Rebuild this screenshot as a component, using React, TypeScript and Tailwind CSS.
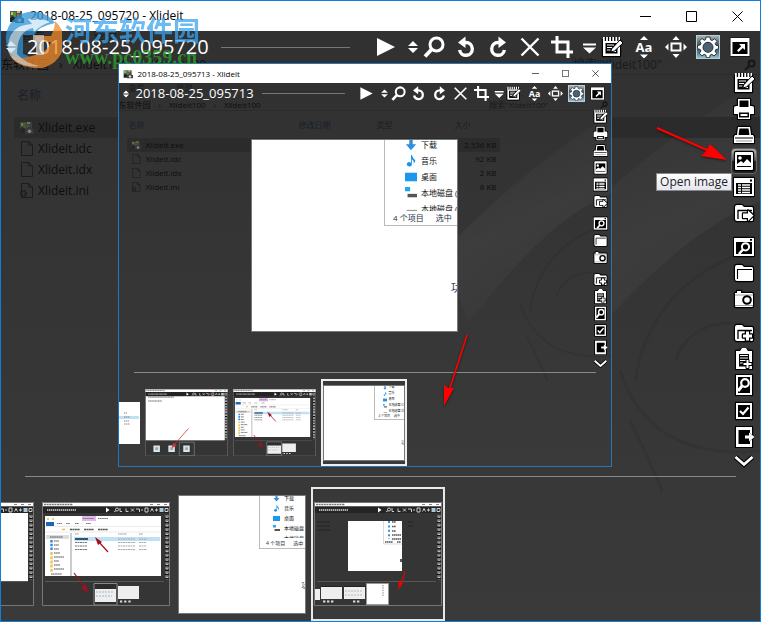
import type { ReactNode } from "react";

type Size = "lg" | "sm";

const sizes = {
  lg: {
    title: "h-[30px] pl-2 gap-[6px] text-[12px]",
    app: "size-[15px]",
    caption: "w-[46px]",
    captionIcon: "size-[11px]",
    toolbar: "h-8 pl-[5px] pr-1",
    name: "text-[20px] gap-[11px]",
    arrows: "h-3 w-[10px]",
    rule: "ml-3 mr-5",
    tools: "w-[386px]",
    icon: "size-[22px]",
    side: "w-8 pt-[7px] gap-2",
    cell: "h-[26px]",
    ghost: "text-[12px]",
  },
  sm: {
    title: "h-[19px] pl-1 gap-[5px] text-[8px]",
    app: "size-[10px]",
    caption: "w-[30px]",
    captionIcon: "size-[7px]",
    toolbar: "h-[21px] pl-1 pr-[3px]",
    name: "text-[13px] gap-[7px]",
    arrows: "h-2 w-[6px]",
    rule: "ml-2 mr-3",
    tools: "w-[251px]",
    icon: "size-[15px]",
    side: "w-5 pt-1 gap-[5px]",
    cell: "h-[17px]",
    ghost: "text-[8px]",
  },
};

function Icon({ children, className = "size-full", box = "0 0 22 22" }: { children: ReactNode; className?: string; box?: string }) {
  return (
    <svg viewBox={box} className={className} fill="white" stroke="none" aria-hidden="true">
      {children}
    </svg>
  );
}

/* white shape on a black halo */
function Halo({ d, w = 2.4 }: { d: string; w?: number }) {
  return <path d={d} fill="white" stroke="black" strokeWidth={w} strokeLinejoin="round" style={{ paintOrder: "stroke" }} />;
}

function Line({ d, w = 2, c = "white" }: { d: string; w?: number; c?: string }) {
  return <path d={d} fill="none" stroke={c} strokeWidth={w} />;
}

const folder = "M2 5Q2 3 4 3H9L11 5H19Q20 5 20 7V18Q20 19 19 19H4Q2 19 2 17Z";

const icons: Record<string, ReactNode> = {
  play: <path d="M2 2 20 11 2 20Z" />,
  updown: <path d="M6 10 11 5 16 10ZM6 12H16L11 17Z" />,
  search: (
    <>
      <circle cx="13.5" cy="8.5" r="6.5" fill="none" stroke="white" strokeWidth="3" />
      <Line d="M9 13 2 20.5" w={3.8} />
    </>
  ),
  undo: (
    <>
      <Line d="M9 6.5H11A6.4 6.4 0 1 1 4.6 14" w={3.4} />
      <path d="M3 6.500 10.500.5V12Z" />
    </>
  ),
  redo: (
    <>
      <Line d="M13 6.5H11A6.4 6.4 0 1 0 17.4 14" w={3.4} />
      <path d="M19 6.500 11.500.5V12Z" />
    </>
  ),
  close: <Line d="M2.500 2.500 19.500 19.500M19.500 2.500 2.500 19.500" w={2.4} />,
  crop: <Line d="M6 0V16H22M0 6H17V22" w={3} />,
  menu: <path d="M7 7.500H20V9.500H7ZM7 11.500H20L13.500 17.500Z" />,
  note: (
    <>
      <Halo d="M2 4H19V20H2Z" />
      <Line d="M3 3H19" w={4} c="black" />
      <path d="M2 3H19" stroke="white" strokeWidth="4" strokeDasharray="1.8 1.3" />
      <path d="M4.5 7H16.5V17.5H4.5Z" fill="black" />
      <Line d="M6 9H13M6 11.5H11M6 14H9.5M12 15.5H15" w={1.2} />
      <path d="M19 4 22 7 13.5 15 9.5 16 11 12.5Z" stroke="black" strokeWidth="1" />
    </>
  ),
  font: (
    <>
      <path d="M7 4 11 0 15 4ZM7 18.5H15L11 22.5Z" />
      <text x="11" y="16" textAnchor="middle" fontSize="13" fontWeight="700" fontFamily="Open Sans, sans-serif">Aa</text>
    </>
  ),
  move: (
    <>
      <rect x="6.5" y="7.5" width="9" height="7" fill="none" stroke="white" strokeWidth="2" />
      <path d="M7.5 4 11 0 14.5 4ZM7.5 18H14.5L11 22ZM3.5 7.5V14.5L0 11ZM18.5 7.5V14.5L22 11Z" />
    </>
  ),
  settings: (
    <>
      <path
        d="M9 1H13L13.5 3.8 15.2 4.5 17.6 2.7 20 5.3 18.2 7.6 19 9.3 21.5 9.7V12.9L18.9 13.5 18.1 15.1 19.6 17.5 17 20 14.8 18.3 13.2 19 12.7 21.7H9.4L8.8 19 7.2 18.3 4.8 19.8 2.3 17.2 4 15 3.2 13.4.5 12.8V9.4L3.3 8.9 4 7.2 2.4 5 5 2.5 7.2 4.2 8.6 3.7Z"
        stroke="#27323b"
        strokeWidth="1"
      />
      <circle cx="11" cy="11.3" r="5" fill="#4c6273" stroke="#222e38" strokeWidth="1" />
    </>
  ),
  window: (
    <>
      <Halo d="M1.500 2H20.500V20H1.500Z" w={1.2} />
      <path d="M3.500 6H18.500V18H3.500Z" fill="black" />
      <path d="M10 8H16V14L13.800 12 9.500 16 8 14.500 12.200 10.300Z" />
    </>
  ),
  print: (
    <>
      <Halo d="M5 1H17V8H19Q21 8 21 10V16H17V21H5V16H1V10Q1 8 3 8H5Z" />
      <path d="M6.5 2.5H15.5V9H6.5ZM6 14.5H16V19.5H6Z" fill="black" />
      <path d="M7.5 16H14.5V18H7.5Z" />
    </>
  ),
  scan: (
    <>
      <Halo d="M5 3H17L18 11H20L21 13V19H1V13L2 11H4Z" />
      <path d="M6.5 4.5H15.5L16.5 11H5.5Z" fill="black" />
      <Line d="M2 14H20" w={1} c="black" />
      <Line d="M3 17H19" w={1} c="#999" />
    </>
  ),
  image: (
    <>
      <Halo d="M3 2H19Q20 2 20 3V19Q20 20 19 20H3Q2 20 2 19V3Q2 2 3 2Z" />
      <path d="M4 5H18V17H4Z" fill="black" />
      <circle cx="7" cy="8" r="1.8" />
      <path d="M4 16V14L8 11 10.5 13 14 9 18 13V16Z" />
    </>
  ),
  list: (
    <>
      <Halo d="M1 2H21V20H1Z" />
      <path d="M3 7H19V18H3ZM17 3.5H19V5.5H17Z" fill="black" />
      <Line d="M5 9H17M5 11.5H17M5 14H17M5 16.5H17" w={1.5} />
      <Line d="M8.5 8V17" w={1} c="black" />
    </>
  ),
  export: (
    <>
      <Halo d={folder} />
      <Line d="M5 17V8.5H19" w={1.3} c="black" />
      <Halo d="M10 11.5H15V8.5L20.5 13.5 15 19V16H10Z" w={2.4} />
    </>
  ),
  find: (
    <>
      <Halo d="M1 2H21V20H1Z" />
      <path d="M3 6H19V18H3ZM17 3H19V4.8H17Z" fill="black" />
      <circle cx="12.5" cy="10.8" r="3.6" fill="none" stroke="white" strokeWidth="2" />
      <Line d="M10 13.5 6 18" w={2.6} />
    </>
  ),
  folder: (
    <>
      <Halo d={folder} />
      <Line d="M4.5 17V7.5H19" w={1.1} c="black" />
    </>
  ),
  camera: (
    <>
      <Halo d="M2 5H4V3H8V5H19Q20 5 20 6V18Q20 19 19 19H3Q2 19 2 18Z" />
      <Line d="M2 7H20M2 17.5H20" w={0.8} c="#888" />
      <circle cx="14" cy="12" r="3.8" stroke="black" strokeWidth="2" />
    </>
  ),
  folderAdd: (
    <>
      <Halo d={folder} />
      <Line d="M5 17V8.5H19" w={1.3} c="black" />
      <Halo d="M13 9.5H16V12.5H19V15.5H16V18.5H13V15.5H10V12.5H13Z" w={2.6} />
    </>
  ),
  clipboard: (
    <>
      <Halo d="M3 3H7L9 0H13L15 3H19V21H3Z" />
      <path d="M6 6H16V18.5H6Z" fill="black" />
      <Line d="M7 7.5H15M7 10H15M7 12.5H13M7 15H12" w={1.2} />
      <Halo d="M13.5 12H15.5V15H18.5V17H15.5V20H13.5V17H10.5V15H13.5Z" w={2} />
    </>
  ),
  preview: (
    <>
      <Halo d="M3 1H19V21H3Z" />
      <path d="M5 3H17V19H5Z" fill="black" />
      <circle cx="12" cy="9" r="3.8" fill="none" stroke="white" strokeWidth="2.2" />
      <Line d="M9 12 5 17" w={3} />
    </>
  ),
  check: (
    <>
      <Halo d="M3 3H19V19H3Z" />
      <path d="M5 5H17V17H5Z" fill="black" />
      <Line d="M7 11 10 14 15.5 7.5" w={2.2} />
    </>
  ),
  exit: (
    <>
      <Halo d="M3 1H19V21H3Z" />
      <path d="M5.5 4H17V18H5.5Z" fill="black" />
      <Halo d="M12 9.5H16V6.5L21.5 11 16 15.5V12.5H12Z" w={0.6} />
    </>
  ),
  more: (
    <>
      <Line d="M2.5 7 11 14.5 19.5 7" w={5} c="black" />
      <Line d="M2.5 7 11 14.5 19.5 7" w={2.8} />
    </>
  ),
};

const tools = ["play", "", "updown", "search", "undo", "redo", "close", "crop", "menu", "note", "font", "move", "settings", "window"];

const sideGroups = [
  ["note", "print", "scan", "image", "list", "export"],
  ["find", "folder", "camera"],
  ["folderAdd", "clipboard", "preview", "check", "exit", "more"],
];

function AppIcon({ className }: { className: string }) {
  return (
    <svg viewBox="0 0 15 15" className={className} aria-hidden="true">
      <path d="M1 2H13V10H1Z" fill="#315f78" />
      <path d="M2 3H5V6H2ZM8 2H11V4H8Z" fill="#e8b92e" />
      <path d="M4 3H7V8H4Z" fill="#5a8d34" />
      <path d="M8 5H10V8H8Z" fill="#d94b2b" />
      <path d="M1 9 4 7 7 10V13H1Z" fill="#222" />
      <path d="M6 9H8L9 7H12L13 9H15V14H6Z" fill="#444" />
      <circle cx="10.5" cy="11.3" r="1.8" fill="#ddd" />
    </svg>
  );
}

function TitleBar({ size, title }: { size: Size; title: string }) {
  const s = sizes[size];
  return (
    <header className={`flex shrink-0 items-center bg-white text-black ${s.title}`}>
      <AppIcon className={s.app} />
      <h1 className="flex-1 whitespace-nowrap">{title} - Xlideit</h1>
      <div className="flex h-full">
        {["M0 5.5H11", "M.5.5H10.5V10.5H.5Z", "M.5.5 10.5 10.5M10.5.5.5 10.5"].map((d, i) => (
          <button key={d} aria-label={["Minimize", "Maximize", "Close"][i]} className={`grid place-items-center ${s.caption}`}>
            <svg viewBox="0 0 11 11" className={s.captionIcon} fill="none" stroke="black">
              <path d={d} />
            </svg>
          </button>
        ))}
      </div>
    </header>
  );
}

function Toolbar({ size, name }: { size: Size; name: string }) {
  const s = sizes[size];
  return (
    <div className={`relative flex shrink-0 items-center ${s.toolbar}`}>
      <div className={`flex items-center whitespace-nowrap leading-none text-white ${s.name}`}>
        <button aria-label="Sort" className={s.arrows}>
          <Icon box="0 0 10 12">
            <path d="M0 5 5 0 10 5ZM0 7H10L5 12Z" />
          </Icon>
        </button>
        <span>{name}</span>
      </div>
      <div className={`h-px flex-1 bg-[#777] ${s.rule}`} />
      <div
        className={`grid h-full shrink-0 grid-cols-[32fr_6fr_10fr_32fr_32fr_32fr_32fr_32fr_18fr_32fr_32fr_32fr_32fr_32fr] ${s.tools}`}
      >
        {tools.map((tool, i) =>
          tool ? (
            <button key={i} aria-label={tool} className="flex min-w-0 items-center justify-center">
              <span
                className={`shrink-0 ${s.icon} ${tool === "settings" ? "outline outline-[#b9cdd6] bg-linear-to-b from-[#a5b2b8] via-[#30424f] to-[#8fc0d2]" : ""}`}
              >
                <Icon>{icons[tool]}</Icon>
              </span>
            </button>
          ) : (
            <span key={i} />
          ),
        )}
      </div>
    </div>
  );
}

function SideBar({ size, active }: { size: Size; active?: string }) {
  const s = sizes[size];
  return (
    <nav className={`relative z-10 flex shrink-0 flex-col ${s.side}`}>
      {sideGroups.map((group) => (
        <div key={group[0]} className="flex flex-col">
          {group.map((tool) => (
            <div key={tool} className={`relative grid place-items-center ${tool === "more" ? (size === "lg" ? "h-5" : "h-[14px]") : s.cell}`}>
              <button
                aria-label={tool}
                className={
                  tool === active
                    ? "grid size-[26px] place-items-center rounded-sm border border-[#666] bg-linear-to-b from-[#aaa] from-10% via-[#555] via-50% to-[#222] to-50%"
                    : "grid place-items-center"
                }
              >
                <Icon className={s.icon}>{icons[tool]}</Icon>
              </button>
              {tool === active && (
                <>
                  <span
                    role="tooltip"
                    className="absolute right-7 top-[25px] border border-[#888] bg-linear-to-b from-white to-[#e4e5f0] px-[3px] text-[12px] leading-4 whitespace-nowrap text-[#222]"
                  >
                    Open image
                  </span>
                  <svg viewBox="0 0 72 35" className="absolute right-8 -top-[22px] h-[35px] w-[72px] overflow-visible drop-shadow-[0_1px_1px_#0008]">
                    <path d="M1 2 51 24" stroke="#f00" strokeWidth="2.2" />
                    <path d="M54 18 71 34 45 30 50 25Z" fill="#f00" />
                  </svg>
                </>
              )}
            </div>
          ))}
        </div>
      ))}
    </nav>
  );
}

function Backdrop({ size }: { size: Size }) {
  const shade = `shade-${size}`;
  const beam = `beam-${size}`;
  return (
    <svg viewBox="0 0 760 590" preserveAspectRatio="none" className="absolute inset-0 size-full" aria-hidden="true">
      <defs>
        <linearGradient id={shade} x1="0" y1="0" x2="0" y2="1">
          <stop offset="0" stopColor="#313131" />
          <stop offset="1" stopColor="#3a3a3a" />
        </linearGradient>
        <linearGradient id={beam} x1=".3" y1="0" x2=".7" y2="1">
          <stop offset="0" stopColor="#fff" stopOpacity="0" />
          <stop offset=".5" stopColor="#fff" stopOpacity=".04" />
          <stop offset="1" stopColor="#fff" stopOpacity="0" />
        </linearGradient>
      </defs>
      <path d="M0 0H760V590H0Z" fill={`url(#${shade})`} />
      <path d="M500 260Q650 110 760 50V170Q660 210 540 370Z" fill={`url(#${beam})`} />
      <g fill="none" stroke="#262626" strokeWidth="3" opacity=".22">
        <path d="M635 350Q650 250 760 215" />
        <path d="M675 330Q690 290 735 292Q760 294 775 320" />
        <path d="M620 340Q650 430 760 420" />
        <path d="M630 390Q650 430 662 460" />
      </g>
    </svg>
  );
}

function FileGlyph({ kind, className }: { kind: string; className: string }) {
  if (kind === "exe") {
    return (
      <span className="opacity-50">
        <AppIcon className={className} />
      </span>
    );
  }
  return (
    <svg viewBox="0 0 15 15" className={className} fill="none" stroke="#1c1c1c" aria-hidden="true">
      <path d="M2.5.5H9.5L13.5 4V14.5H2.5ZM9.5.5V4H13.5" />
      {kind === "ini" && <circle cx="4.5" cy="10.5" r="2.5" strokeWidth="2" strokeDasharray="1.3 .7" />}
    </svg>
  );
}

const files = [
  { name: "Xlideit.exe", size: "2,536 KB" },
  { name: "Xlideit.idc", size: "92 KB" },
  { name: "Xlideit.idx", size: "2 KB" },
  { name: "Xlideit.ini", size: "8 KB" },
];

/* the folder window that shows through the dark overlay */
function GhostFolder({ size }: { size: Size }) {
  const lg = size === "lg";
  return (
    <div className={`absolute inset-x-0 top-0 overflow-hidden whitespace-nowrap text-[#0e0e0e] ${sizes[size].ghost}`}>
      <div className={`flex items-start text-[#1c1c1c] ${lg ? "h-6 gap-12 pl-5 leading-3" : "h-4 gap-8 pl-[10px] leading-[10px]"}`}>
        <span>查看</span>
        <span>管理</span>
      </div>
      <div className={`flex items-center justify-between border-b border-[#2b2b2b] ${lg ? "h-5 pr-1" : "h-3 pr-[3px]"}`}>
        <div className={`flex ${lg ? "gap-[10px]" : "gap-2"}`}>
          <span>东软件园</span>
          <span>›</span>
          <span>Xlideit100</span>
          <span>›</span>
          <span>Xlideit100</span>
        </div>
        <div className={`flex items-center justify-between border-l border-[#2b2b2b] text-[#1a1a1a] ${lg ? "w-[184px]" : "w-[119px]"}`}>
          <span>搜索"Xlideit100"</span>
          <svg viewBox="0 0 12 12" className={lg ? "size-3" : "size-2"} fill="none" stroke="#161616" strokeWidth="2">
            <path d="M1 11 5 7" />
            <circle cx="7.5" cy="4.5" r="3" />
          </svg>
        </div>
      </div>
      <div className={`text-[#182028] ${lg ? "pl-4 pt-3" : "grid grid-cols-[170px_78px_78px_auto] pl-[10px] pt-2"}`}>
        <span>名称</span>
        {!lg && (
          <>
            <span>修改日期</span>
            <span>类型</span>
            <span>大小</span>
          </>
        )}
      </div>
      <ul className={lg ? "pl-[13px] pt-3" : "w-[381px] pl-2 pt-[7px]"}>
        {files.map((file, i) => (
          <li key={file.name} className={`flex items-center ${i === 0 ? "bg-[#2b2b2b]" : ""} ${lg ? "h-[21px] gap-1 pl-[5px]" : "h-[14px] gap-[5px] pl-1"}`}>
            <FileGlyph kind={file.name.slice(-3)} className={lg ? "size-[15px]" : "size-[10px]"} />
            <span>{file.name}</span>
            {!lg && <span className="ml-auto pr-[3px]">{file.size}</span>}
          </li>
        ))}
      </ul>
    </div>
  );
}

const places = ["下载", "音乐", "桌面", "本地磁盘 (C", "本地磁盘 (D"];

const placeIcons = [
  <path d="M5 0H9V6H13L7 13 1 6H5Z" fill="#2f8fe0" />,
  <path d="M7 0H8Q9 4 12 6 12 9 10 10 11 7 8 5V11A3 2.4 0 1 1 7 9Z" fill="#1d93e8" />,
  <path d="M0 2H14V12H0Z" fill="#1c97ea" />,
  <>
    <path d="M0 0H6V5H0Z" fill="#25a5ea" />
    <path d="M3 8H14V12H3Z" fill="#555" />
  </>,
  <path d="M2 8H14V11H2Z" fill="#999" />,
];

const snippetSizes = {
  full: { box: "h-[193px] w-[207px]", panel: "h-[86px] w-[73px] text-[8px]", list: "-mt-[3px]", row: "h-4 gap-1 pl-5", icon: "size-3", foot: "h-[14px] gap-3 pl-2 leading-[14px]", crumb: "bottom-[38px] text-[11px]" },
  lg: { box: "h-[119px] w-32", panel: "h-[53px] w-[46px] text-[5px]", list: "-mt-[2px]", row: "h-[10px] gap-1 pl-[13px]", icon: "size-[7px]", foot: "h-[10px] gap-2 pl-[6px] leading-[10px]", crumb: "bottom-[24px] text-[7px]" },
  sm: { box: "h-[76px] w-[82px]", panel: "h-[34px] w-[30px] text-[3px]", list: "-mt-[1px]", row: "h-[6px] gap-[2px] pl-2", icon: "size-1", foot: "h-[6px] gap-1 pl-1 leading-[6px]", crumb: "bottom-[15px] text-[5px]" },
};

function Snippet({ variant }: { variant: keyof typeof snippetSizes }) {
  const v = snippetSizes[variant];
  return (
    <div className={`relative shrink-0 overflow-hidden border border-[#777] bg-white text-[#111] ${v.box}`}>
      <div className={`absolute right-0 top-0 overflow-hidden border-b border-l border-[#bbb] bg-white whitespace-nowrap ${v.panel}`}>
        <ul className={v.list}>
          {places.map((place, i) => (
            <li key={place} className={`flex items-center ${v.row}`}>
              <svg viewBox="0 0 14 14" className={`shrink-0 ${v.icon}`}>
                {placeIcons[i]}
              </svg>
              {place}
            </li>
          ))}
        </ul>
        <div className={`absolute inset-x-0 bottom-0 flex bg-white text-[#234] ${v.foot}`}>
          <span>4 个项目</span>
          <span>选中</span>
        </div>
      </div>
      <div className={`absolute right-0 w-[3%] overflow-hidden leading-none whitespace-nowrap text-[#223366] ${v.crumb}`}>功</div>
    </div>
  );
}

/* a captured viewer window in thumbnail form */
function MiniWindow({ className, children }: { className: string; children: ReactNode }) {
  return (
    <svg viewBox="0 0 128 104" className={`shrink-0 ${className}`} aria-hidden="true">
      <path d="M0 0H128V104H0Z" fill="#353535" />
      <path d="M0 0H128V4.5H0Z" fill="#fff" />
      <path d="M0 4.5H128V11H0Z" fill="#242424" />
      <path d="M2 2.5H31" stroke="#777" strokeWidth="1.4" strokeDasharray="2 .6" />
      <path d="M108 2.5H111M115 2.5H118M122 2.5H125" stroke="#888" />
      <path d="M5 8H34" stroke="#aaa" strokeWidth="2" strokeDasharray="1.4 .6" />
      <path d="M64 5.500 67.500 8 64 10.500Z" fill="#fff" />
      <g fill="none" stroke="#ccc" strokeWidth="1">
        <path d="M72 10 74 8.500M78 6V9.500H80M84 6.500V9.500H86.500M89 6.500 92 9.500M92 6.500 89 9.500M94 7H97.500V10M99 8H101" />
        <circle cx="75" cy="7.5" r="1.500" />
        <path d="M103 6H106V10H103ZM108.500 9.500 110 6.500 111.500 9.500M113 8H116M114.500 6.500V9.500M123 6.500H126V9.500H123Z" />
      </g>
      <path d="M117.500 6H121.500V10H117.500Z" fill="#a9c9d6" />
      <path d="M125 13V78" stroke="#111" strokeWidth="4" />
      <path d="M125 13V78" stroke="#ccc" strokeWidth="3" strokeDasharray="2.8 1.5" />
      <path d="M125 13V78" stroke="#222" strokeWidth="1" strokeDasharray="1.8 2.5" />
      <path d="M3 79.5H122" stroke="#666" strokeWidth=".7" />
      {children}
      <path d="M.5.5H127.5V103.5H.5Z" fill="none" stroke="#777" />
    </svg>
  );
}

function MiniArrow({ from, to, head, color = "#a5101e" }: { from: string; to: string; head: string; color?: string }) {
  return (
    <g>
      <path d={`M${from}L${to}`} stroke={color} strokeWidth="1.2" />
      <path d={head} fill={color} />
    </g>
  );
}

function ExplorerThumb({ className }: { className: string }) {
  return (
    <MiniWindow className={className}>
      <path d="M3 14H119V74H3Z" fill="#fff" />
      <path d="M4 20H12V24H4Z" fill="#1668b8" />
      <path d="M40 14H54V19H40Z" fill="#e2b8ec" />
      <path d="M41 16.5H52M56 16.5H66M15 21.5H20M24 21.5H28M33 21.5H37M44 21.5H49" stroke="#777" strokeDasharray="1.6 .5" />
      <path d="M3 24.5H119M3 30H119" stroke="#ddd" strokeWidth=".6" />
      <path d="M5 17H7M10 17H12M20 27.5H23" stroke="#e9bf4c" strokeWidth="1.6" />
      <path d="M28 27.5H38M42 27.5H52M56 27.5H66" stroke="#555" strokeWidth="1.3" strokeDasharray="2 .4" />
      <path d="M4 33H27V37H4Z" fill="#ddd" />
      <path d="M29 31V74" stroke="#ccc" strokeWidth="2" />
      <path d="M8 35H21" stroke="#555" strokeDasharray="1.7 .4" />
      <path d="M9.5 38V49" stroke="#2d86d6" strokeWidth="2.4" strokeDasharray="2.4 1.4" />
      <path d="M9.5 50V70" stroke="#edc455" strokeWidth="2.4" strokeDasharray="3 1.2" />
      <path d="M12 39H17M12 43H17M12 47H17M12 51H18M12 55H22M12 59H17M12 63H18M12 67H22M9 72H20" stroke="#555" strokeWidth="1.2" strokeDasharray="1.7 .4" />
      <path d="M32 35H118V39H32Z" fill="#bfe1f5" />
      <path d="M33 32H37M76 32H85M97 32H101" stroke="#999" strokeDasharray="1.6 .5" />
      <path d="M33 37H46" stroke="#246" strokeWidth="1.8" />
      <path d="M33 40.5H45M33 44H45M33 47.5H45" stroke="#777" strokeWidth="1.2" strokeDasharray="2 .5" />
      <path d="M76 37H93M76 40.5H93M76 44H93M76 47.5H93M97 37H105M97 40.5H104M97 44H104M97 47.5H105" stroke="#aaa" strokeWidth="1.2" strokeDasharray="2 .5" />
      <path d="M52 81.5H75V103H52Z" fill="#2c2c2c" stroke="#888" />
      <path d="M53 87H74V100H53ZM76 84H97V97H76Z" fill="#eee" />
      <path d="M54 90H72M54 94H70" stroke="#8ab" strokeWidth=".8" strokeDasharray="2 1" />
      <path d="M78 99.5H90" stroke="#ddd" strokeWidth="1.8" strokeDasharray="2.2 2" />
      <MiniArrow from="66 50" to="56 39" head="M53 35 60 40 56 43Z" />
      <MiniArrow from="32 71" to="44 87" head="M46 91 39 86 44 83Z" />
    </MiniWindow>
  );
}

function DocumentThumb({ className }: { className: string }) {
  return (
    <MiniWindow className={className}>
      <path d="M1 11H123V79H1Z" fill="#fff" />
      <path d="M5 12.5H45M5 18.5H26" stroke="#444" strokeWidth="1.2" strokeDasharray="2 .5" />
      <path d="M13 87H23V97H13ZM36 87H46V97H36ZM59 87H69V97H59Z" fill="#dde3e6" />
      <path d="M16 90H20V94H16ZM39 90H43V94H39ZM62 90H66V94H62Z" fill="#8fa8b5" />
      <path d="M53 82H76V103H53Z" fill="none" stroke="#888" />
      <MiniArrow from="67 61" to="45 86" head="M41 91 44 83 49 87Z" color="#d03038" />
    </MiniWindow>
  );
}

function ViewerThumb({ className }: { className: string }) {
  return (
    <MiniWindow className={className}>
      <path d="M3 20H16M3 24H16M3 28H16M94 20H99M94 24H99" stroke="#222" />
      <path d="M34 19H88V69H34Z" fill="#fff" />
      <path d="M69.5 19V42H88" fill="none" stroke="#ccc" strokeWidth=".7" />
      <path d="M75 19V37" stroke="#3494dc" strokeWidth="2" strokeDasharray="2 2.4" />
      <path d="M78 20H82M78 24.5H82M78 29H82M78 33H87M78 37H87M71 40H79M83 40H87" stroke="#555" strokeWidth="1.3" strokeDasharray="1.6 .4" />
      <path d="M87 57V60" stroke="#223" strokeWidth="1.5" />
      <path d="M1 87H6V98H1ZM7 84H28V97H7ZM30 84H51V97H30Z" fill="#eee" />
      <path d="M7 84.5H28M30 84.5H51" stroke="#222" />
      <path d="M31 89H49M31 93H49" stroke="#aaa" strokeWidth=".8" strokeDasharray="2 1" />
      <path d="M9 99.5H20M39 99.5H46" stroke="#ddd" strokeWidth="1.8" strokeDasharray="2.4 1.6" />
      <path d="M52.5 81.5H74.5V102.5H52.5Z" fill="#fff" stroke="#999" />
      <path d="M69 83V94" stroke="#789" strokeDasharray="1.4 1" />
      <MiniArrow from="91 70" to="87 82" head="M84.5 88 84.5 79 89 81Z" color="#e00" />
    </MiniWindow>
  );
}

type WindowProps = {
  size: Size;
  title: string;
  className: string;
  active?: string;
  stage: ReactNode;
  strip: ReactNode;
};

function ViewerWindow({ size, title, className, active, stage, strip }: WindowProps) {
  const lg = size === "lg";
  return (
    <section className={`relative flex flex-col overflow-hidden border bg-[#343434] ${className}`}>
      <TitleBar size={size} title={title} />
      <div className="relative flex min-h-0 flex-1 flex-col">
        <Backdrop size={size} />
        <GhostFolder size={size} />
        <Toolbar size={size} name={title} />
        <div className="relative flex min-h-0 flex-1">
          <div className={`flex min-w-0 flex-1 items-center justify-center ${lg ? "" : "pb-[2px]"}`}>{stage}</div>
          <SideBar size={size} active={active} />
        </div>
        <hr className={`relative border-0 border-t border-[#888] ${lg ? "mx-6 mb-[10px] mt-[9px]" : "mx-[15px] mb-[6px] mt-1"}`} />
        <div className={`relative flex shrink-0 items-center overflow-hidden ${lg ? "h-[134px] gap-2" : "h-[87px] gap-[5px]"}`}>{strip}</div>
      </div>
    </section>
  );
}

function Watermark() {
  return (
    <div className="pointer-events-none absolute left-[5px] top-[11px] flex gap-[3px] opacity-75">
      <svg viewBox="0 0 57 57" className="size-[57px]" aria-hidden="true">
        <path d="M1 30A27 27 0 0 1 50 12Q34 15 29 24H18V43L26 46V54A27 27 0 0 1 1 30Z" fill="#2f93d6" />
        <path d="M50 10A27 27 0 0 1 24 56Q10 54 5 44 16 50 30 44 44 40 46 31H30V25H46Q50 17 50 10Z" fill="#f08a2a" />
        <path d="M3 40Q2 14 27 13L23 8Q36 7 45 11 36 14 29 21L28 17Q12 20 12 43 20 52 34 55 10 57 3 40Z" fill="#fff" opacity=".75" />
        <path d="M28 24H39V44H31V31H28Z" fill="#fff" opacity=".75" />
      </svg>
      <div className="flex flex-col whitespace-nowrap">
        <span className="pt-1 text-[27px] leading-8 font-bold text-[#3ba3ee]">河东软件园</span>
        <span className="font-['Liberation_Serif',serif] text-[20px] leading-5 font-bold text-[#2da52d]">www.pc0359.cn</span>
      </div>
    </div>
  );
}

export default function App() {
  return (
    <main className="relative font-['Open_Sans','Noto_Sans_CJK_SC',sans-serif]">
      <ViewerWindow
        size="lg"
        title="2018-08-25_095720"
        className="h-screen min-h-[560px] border-[#0f7fdc]"
        active="image"
        stage={
          <div className="relative h-full w-[494px] max-w-full">
            <ViewerWindow
              size="sm"
              title="2018-08-25_095713"
              className="h-full border-[#2277b8]"
              stage={<Snippet variant="full" />}
              strip={
                <>
                  <svg viewBox="0 0 21 42" className="h-[42px] w-[21px] shrink-0" aria-hidden="true">
                    <path d="M0 0H21V42H0Z" fill="#fff" />
                    <path d="M0 14H20V17H0Z" fill="#bfe1f5" />
                    <path d="M5 11H8M5 15H11M5 19H10M5 22H11" stroke="#888" strokeDasharray="1.5 .5" />
                  </svg>
                  <DocumentThumb className="w-[83px]" />
                  <ExplorerThumb className="w-[83px]" />
                  <div className="flex h-full shrink-0 items-center border-2 border-[#eee]">
                    <Snippet variant="sm" />
                  </div>
                </>
              }
            />
            <svg viewBox="0 0 26 75" className="absolute bottom-[58px] right-[144px] h-[75px] w-[26px] drop-shadow-[0_1px_1px_#0008]" aria-hidden="true">
              <path d="M25 1 7 57" stroke="#f00" strokeWidth="1.6" />
              <path d="M2 72 2 51 6 54 12 54Z" fill="#f00" />
            </svg>
          </div>
        }
        strip={
          <>
            <button aria-label="Previous picture" className="flex w-[33px] shrink-0 justify-end overflow-hidden">
              <MiniWindow className="w-32">
                <path d="M1 11H122V79H1Z" fill="#fff" />
              </MiniWindow>
            </button>
            <button aria-label="Folder capture">
              <ExplorerThumb className="w-32" />
            </button>
            <button aria-label="White capture">
              <Snippet variant="lg" />
            </button>
            <button aria-label="Current picture" className="-ml-[3px] flex h-full shrink-0 items-center border-2 border-[#e8e8e8] px-px">
              <ViewerThumb className="w-32" />
            </button>
          </>
        }
      />
      <Watermark />
    </main>
  );
}
